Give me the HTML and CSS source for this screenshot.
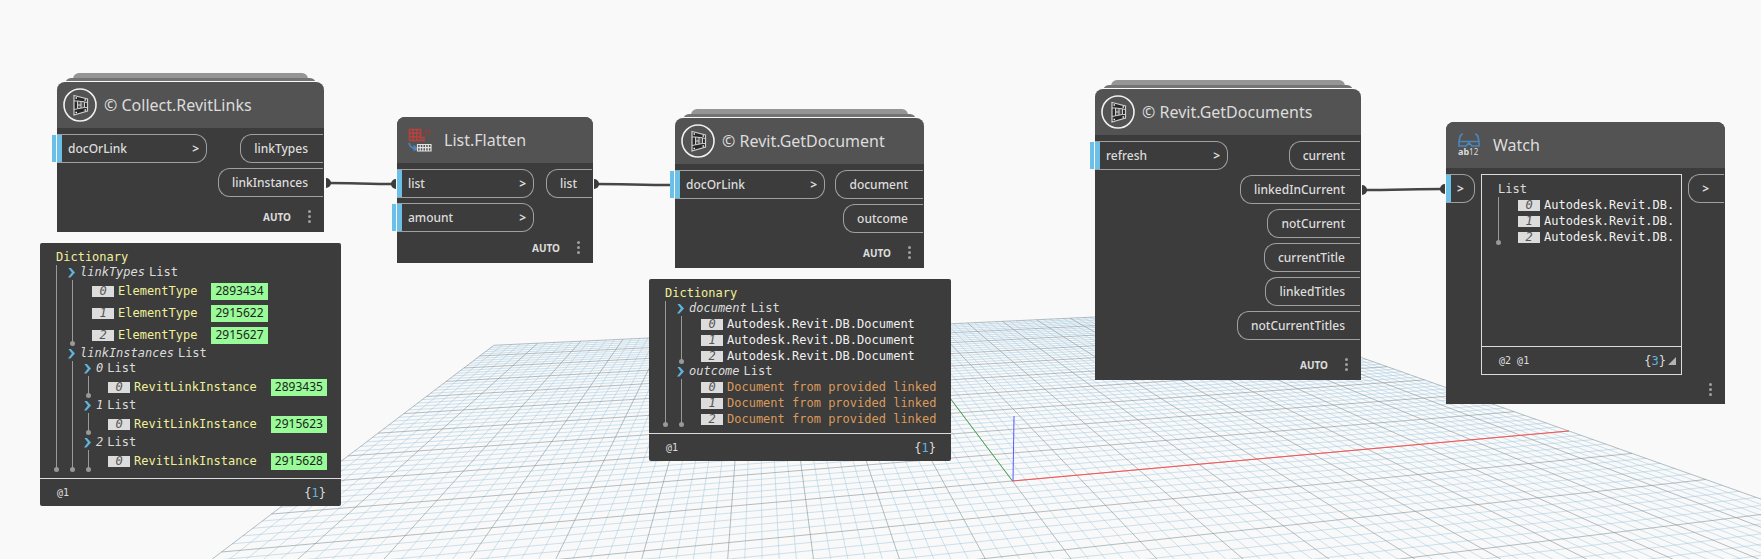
FILE: index.html
```html
<!DOCTYPE html>
<html lang="en">
    <head>
        <meta charset="UTF-8" />
        <meta name="viewport" content="width=device-width, initial-scale=1.0" />
        <title>Workspace</title>
        <link rel="stylesheet" href="styles.css">
    </head>
    <body>
        <svg class="layer" aria-hidden="true">
            <path id="gridMinor" class="grid-minor"></path>
            <path id="gridMajor" class="grid-major"></path>
            <path id="axisY" class="axis-y"></path>
            <path id="axisX" class="axis-x"></path>
            <path class="axis-z" d="M1013 481L1014 416"></path>
        </svg>

        <!-- shared symbol for custom nodes -->
        <svg width="0" height="0" class="defs" aria-hidden="true">
            <symbol id="customIcon" viewBox="0 0 34 34">
                <circle cx="17" cy="17" r="16" fill="none" stroke="#f0f0f0" stroke-width="1.6"></circle>
                <path d="M11 7.500L24.500 11V23L11 27Z" fill="#262626" stroke="#cfcfcf" stroke-width="1.200"></path>
                <path d="M14.500 13L21.500 13.800V19.500L14.500 20.800Z" fill="#535353" stroke="#cfcfcf"></path>
                <path d="M18 13.500V20M11 13L14.500 13M11 21.500L14.500 20.800M21.500 14L24.500 14.500M21.500 19.500L24.500 19.500M14.500 17H18" fill="none" stroke="#cfcfcf"></path>
                <path d="M12.500 10H14M21.500 12H23M12.500 24.500H14M21.500 22H23" fill="none" stroke="#f0f0f0" stroke-width="1.500"></path>
            </symbol>
        </svg>

        <section id="collectLinks" class="node custom">
            <header class="node-header">
                <svg class="icon-custom"><use href="#customIcon"></use></svg>
                <span class="title">© Collect.RevitLinks</span>
            </header>
            <div class="ports">
                <div class="inputs">
                    <div class="port input open">docOrLink <button class="level" aria-label="docOrLink options">&gt;</button></div>
                </div>
                <div class="outputs">
                    <div class="port output">linkTypes</div>
                    <div class="port output">linkInstances</div>
                </div>
            </div>
            <footer class="node-footer"><span>AUTO</span><button class="dots" aria-label="Node menu"><i></i><i></i><i></i></button></footer>
        </section>

        <section id="flatten" class="node">
            <header class="node-header">
                <svg class="icon" viewBox="0 0 24 24">
                    <path d="M1.500 1.500H12.500V12.500H1.500ZM1.500 5.200H12.500M1.500 8.800H12.500M5.200 1.500V12.500M8.800 1.500V12.500M12.500 9.500H16V12.500H12.500" fill="none" stroke="#b9403c" stroke-width="1.600"></path>
                    <path d="M17.500 8V2.500H21.500V8" fill="none" stroke="#8c3f3f" stroke-width="1.400"></path>
                    <path d="M1 15C2 19 4 20.500 8 20.500M5.500 17.500L9 20.500L5.500 22.500" fill="none" stroke="#4a87bd" stroke-width="1.600"></path>
                    <path d="M9.500 16.500H23V23H9.500ZM9.500 19.700H23M12.200 16.500V23M14.900 16.500V23M17.600 16.500V23M20.300 16.500V23" fill="none" stroke="#e2e2e2" stroke-width="1.200"></path>
                </svg>
                <span class="title">List.Flatten</span>
            </header>
            <div class="ports">
                <div class="inputs">
                    <div class="port input">list <button class="level" aria-label="list options">&gt;</button></div>
                    <div class="port input open">amount <button class="level" aria-label="amount options">&gt;</button></div>
                </div>
                <div class="outputs">
                    <div class="port output">list</div>
                </div>
            </div>
            <footer class="node-footer"><span>AUTO</span><button class="dots" aria-label="Node menu"><i></i><i></i><i></i></button></footer>
        </section>

        <section id="getDocument" class="node custom">
            <header class="node-header">
                <svg class="icon-custom"><use href="#customIcon"></use></svg>
                <span class="title">© Revit.GetDocument</span>
            </header>
            <div class="ports">
                <div class="inputs">
                    <div class="port input open">docOrLink <button class="level" aria-label="docOrLink options">&gt;</button></div>
                </div>
                <div class="outputs">
                    <div class="port output">document</div>
                    <div class="port output">outcome</div>
                </div>
            </div>
            <footer class="node-footer"><span>AUTO</span><button class="dots" aria-label="Node menu"><i></i><i></i><i></i></button></footer>
        </section>

        <section id="getDocuments" class="node custom">
            <header class="node-header">
                <svg class="icon-custom"><use href="#customIcon"></use></svg>
                <span class="title">© Revit.GetDocuments</span>
            </header>
            <div class="ports">
                <div class="inputs">
                    <div class="port input open">refresh <button class="level" aria-label="refresh options">&gt;</button></div>
                </div>
                <div class="outputs">
                    <div class="port output">current</div>
                    <div class="port output">linkedInCurrent</div>
                    <div class="port output">notCurrent</div>
                    <div class="port output">currentTitle</div>
                    <div class="port output">linkedTitles</div>
                    <div class="port output">notCurrentTitles</div>
                </div>
            </div>
            <footer class="node-footer"><span>AUTO</span><button class="dots" aria-label="Node menu"><i></i><i></i><i></i></button></footer>
        </section>

        <section id="watch" class="node">
            <header class="node-header">
                <svg class="icon" viewBox="0 0 24 24">
                    <path d="M6 1C3 1 3 4 2 8.500V13H9L12 10L15 13H22V8.500C21 4 21 1 18 1M2 8.500H22" fill="none" stroke="#4a87bd" stroke-width="1.600"></path>
                    <text x="1" y="22" class="icon-text">ab<tspan class="icon-digits">12</tspan></text>
                </svg>
                <span class="title">Watch</span>
            </header>
            <div class="ports">
                <div class="inputs">
                    <div class="port input"><button class="level" aria-label="Input">&gt;</button></div>
                </div>
                <div class="watch-box">
                    <div class="tree">
                        <div class="row">List</div>
                        <ul class="branch">
                            <li class="item"><em class="index">0</em>Autodesk.Revit.DB.</li>
                            <li class="item"><em class="index">1</em>Autodesk.Revit.DB.</li>
                            <li class="item"><em class="index">2</em>Autodesk.Revit.DB.</li>
                        </ul>
                    </div>
                    <div class="levels"><span>@2 @1</span><span class="count">{<b>3</b>}</span><span class="grip"></span></div>
                </div>
                <div class="outputs">
                    <div class="port output"><button class="level" aria-label="Output">&gt;</button></div>
                </div>
            </div>
            <footer class="node-footer"><button class="dots" aria-label="Node menu"><i></i><i></i><i></i></button></footer>
        </section>

        <div id="linksPreview" class="preview">
            <div class="tree">
                <div class="row type">Dictionary</div>
                <ul class="branch">
                    <li>
                        <div class="row"><button class="toggle" aria-label="Toggle linkTypes"></button><em>linkTypes</em>List</div>
                        <ul class="branch">
                            <li class="item element"><em class="index">0</em>ElementType<a href="#2893434" class="id">2893434</a></li>
                            <li class="item element"><em class="index">1</em>ElementType<a href="#2915622" class="id">2915622</a></li>
                            <li class="item element"><em class="index">2</em>ElementType<a href="#2915627" class="id">2915627</a></li>
                        </ul>
                    </li>
                    <li>
                        <div class="row"><button class="toggle" aria-label="Toggle linkInstances"></button><em>linkInstances</em>List</div>
                        <ul class="branch">
                            <li>
                                <div class="row"><button class="toggle" aria-label="Toggle 0"></button><em>0</em>List</div>
                                <ul class="branch">
                                    <li class="item element"><em class="index">0</em>RevitLinkInstance<a href="#2893435" class="id">2893435</a></li>
                                </ul>
                            </li>
                            <li>
                                <div class="row"><button class="toggle" aria-label="Toggle 1"></button><em>1</em>List</div>
                                <ul class="branch">
                                    <li class="item element"><em class="index">0</em>RevitLinkInstance<a href="#2915623" class="id">2915623</a></li>
                                </ul>
                            </li>
                            <li>
                                <div class="row"><button class="toggle" aria-label="Toggle 2"></button><em>2</em>List</div>
                                <ul class="branch">
                                    <li class="item element"><em class="index">0</em>RevitLinkInstance<a href="#2915628" class="id">2915628</a></li>
                                </ul>
                            </li>
                        </ul>
                    </li>
                </ul>
            </div>
            <div class="levels"><span>@1</span><span class="count">{<b>1</b>}</span></div>
        </div>

        <div id="documentPreview" class="preview">
            <div class="tree">
                <div class="row type">Dictionary</div>
                <ul class="branch">
                    <li>
                        <div class="row"><button class="toggle" aria-label="Toggle document"></button><em>document</em>List</div>
                        <ul class="branch">
                            <li class="item"><em class="index">0</em>Autodesk.Revit.DB.Document</li>
                            <li class="item"><em class="index">1</em>Autodesk.Revit.DB.Document</li>
                            <li class="item"><em class="index">2</em>Autodesk.Revit.DB.Document</li>
                        </ul>
                    </li>
                    <li>
                        <div class="row"><button class="toggle" aria-label="Toggle outcome"></button><em>outcome</em>List</div>
                        <ul class="branch">
                            <li class="item string"><em class="index">0</em>Document from provided linked</li>
                            <li class="item string"><em class="index">1</em>Document from provided linked</li>
                            <li class="item string"><em class="index">2</em>Document from provided linked</li>
                        </ul>
                    </li>
                </ul>
            </div>
            <div class="levels"><span>@1</span><span class="count">{<b>1</b>}</span></div>
        </div>

        <svg class="layer wires" aria-hidden="true">
            <path class="wire" d="M328 183C350 183 370 184 394 184"></path>
            <path class="plug" d="M326 178A5 5 0 0 1 326 188ZM396 179A5 5 0 0 0 396 189Z"></path>
            <path class="wire" d="M596 184C620 184 645 185 670 185"></path>
            <path class="plug" d="M594 179A5 5 0 0 1 594 189Z"></path>
            <path class="wire" d="M1364 190C1390 190 1420 189 1443 189"></path>
            <path class="plug" d="M1362 185A5 5 0 0 1 1362 195ZM1445 184A5 5 0 0 0 1445 194Z"></path>
        </svg>

        <script>
            // Perspective of the ground plane: origin and the two vanishing points
            const origin = { x: 1012.5, y: 481 };
            const vanishX = { x: 4765, y: 144.1, k: 0.003482 };
            const vanishY = { x: 758.8, y: 144.1, k: 0.01697 };

            function project(u, v) {
                const a = vanishX.k * u;
                const b = vanishY.k * v;
                const w = 1 + a + b;
                const x = (origin.x + a * vanishX.x + b * vanishY.x) / w;
                const y = (origin.y + a * vanishX.y + b * vanishY.y) / w;
                return x.toFixed(1) + " " + y.toFixed(1);
            }

            function line(u1, v1, u2, v2) {
                return "M" + project(u1, v1) + "L" + project(u2, v2);
            }

            function drawGrid() {
                let minor = "";
                let major = "";
                for (let i = -50; i <= 50; i++) {
                    // the near part of the plane is below the window
                    let d = line(i, -40, i, 50);
                    if (i >= -40) d += line(-50, i, 50, i);
                    if (i % 5 === 0) major += d;
                    else minor += d;
                }
                document.getElementById("gridMinor").setAttribute("d", minor);
                document.getElementById("gridMajor").setAttribute("d", major);
                document.getElementById("axisX").setAttribute("d", line(0, 0, 50, 0));
                document.getElementById("axisY").setAttribute("d", line(0, 0, 0, 50));
            }

            drawGrid();
        </script>
    </body>
</html>
```
FILE: styles.css
```css
* {
    box-sizing: border-box;
}
body {
    margin: 0;
    min-height: 100vh;
    position: relative;
    overflow: hidden;
    background-color: #f9f9f9;
    font-family: "Noto Sans", "Open Sans", sans-serif;
    font-size: 12px;
    color: #dcdcdc;
}
button {
    margin: 0;
    padding: 0;
    border: 0;
    background: none;
    color: inherit;
    font: inherit;
    cursor: pointer;
}
ul {
    list-style: none;
    margin: 0;
    padding: 0;
}

/* background grid and wires */
.layer {
    position: absolute;
    top: 0;
    left: 0;
    width: 100%;
    height: 100%;
    pointer-events: none;
}
.layer path {
    fill: none;
}
.defs {
    position: absolute;
}
.grid-minor {
    stroke: #a0c8e0;
    stroke-opacity: 0.5;
}
.grid-major {
    stroke: #82949f;
    stroke-opacity: 0.6;
}
.axis-x {
    stroke: #ff5050;
}
.axis-y {
    stroke: #4ca64c;
}
.axis-z {
    stroke: #5a5aff;
}
.wire {
    stroke: #464646;
    stroke-width: 2.5;
}
.layer .plug {
    fill: #3c3c3c;
}

/* nodes */
.node {
    position: absolute;
    background-color: #3c3c3c;
    border-radius: 8px 8px 0 0;
}
#collectLinks {
    left: 57px;
    top: 82px;
    width: 267px;
    --input-width: 150px;
}
#flatten {
    left: 397px;
    top: 117px;
    width: 196px;
    --input-width: 137px;
}
#getDocument {
    left: 675px;
    top: 118px;
    width: 249px;
    --input-width: 150px;
}
#getDocuments {
    left: 1095px;
    top: 89px;
    width: 266px;
    --input-width: 133px;
}
#watch {
    left: 1446px;
    top: 122px;
    width: 279px;
    --input-width: 29px;
}
.custom::before,
.custom::after {
    content: "";
    position: absolute;
    z-index: -1;
    border-radius: 6px 6px 0 0;
}
.custom::before {
    left: 16px;
    right: 16px;
    top: -9px;
    height: 8px;
    background-color: #959595;
}
.custom::after {
    left: 8px;
    right: 8px;
    top: -4px;
    height: 8px;
    background-color: #747474;
}
.node-header {
    display: flex;
    align-items: center;
    height: 46px;
    background-color: #535353;
    border-radius: 8px 8px 0 0;
}
.custom .node-header {
    box-shadow: 0 -1px 0 #f9f9f9;
}
.icon-custom {
    width: 34px;
    height: 34px;
    margin-left: 6px;
}
.icon {
    width: 24px;
    height: 24px;
    margin: 0 12px 0 11px;
}
.icon-text {
    font-size: 9px;
    font-weight: bold;
    fill: #dcdcdc;
}
.icon-digits {
    font-size: 8px;
    font-weight: normal;
}
.title {
    font-size: 16px;
    white-space: nowrap;
}
.icon-custom + .title {
    margin-left: 7px;
}
.ports {
    display: flex;
    justify-content: space-between;
    padding-top: 6px;
}
.inputs,
.outputs {
    display: flex;
    flex-direction: column;
    gap: 5px;
}
.outputs {
    align-items: flex-end;
    padding-right: 1px;
}
.port {
    display: flex;
    align-items: center;
    justify-content: space-between;
    height: 29px;
    border: 1px solid #a0a0a0;
    font-weight: 500;
}
.input {
    position: relative;
    width: var(--input-width);
    padding: 0 7px 0 11px;
    border-left: 0;
    border-radius: 0 12px 12px 0;
}
.input::before {
    content: "";
    position: absolute;
    left: 0;
    top: 0;
    width: 5px;
    height: 27px;
    background-color: #6ac0e7;
}
.input.open::after {
    content: "";
    position: absolute;
    left: -5px;
    top: 0;
    width: 4px;
    height: 27px;
    background-color: #6ac0e7;
}
.output {
    padding: 0 15px 0 13px;
    border-right: 0;
    border-radius: 12px 0 0 12px;
}
.level {
    font-weight: bold;
}
.node-footer {
    display: flex;
    align-items: center;
    justify-content: flex-end;
    gap: 17px;
    height: 31px;
    padding-right: 13px;
    font-size: 10px;
    font-weight: bold;
}
.custom .node-footer {
    margin-top: 4px;
}
#getDocuments .node-footer {
    margin-top: 9px;
}
#watch .node-footer {
    height: 29px;
}
.dots {
    display: flex;
    flex-direction: column;
    gap: 2px;
}
.dots i {
    width: 3px;
    height: 3px;
    border-radius: 50%;
    background-color: #a0a0a0;
}

/* value trees */
.preview {
    position: absolute;
    background-color: #3c3c3c;
    border-radius: 2px;
}
#linksPreview {
    left: 40px;
    top: 243px;
    width: 301px;
}
#documentPreview {
    left: 649px;
    top: 279px;
    width: 302px;
}
.watch-box {
    display: flex;
    flex-direction: column;
    width: 201px;
    height: 201px;
    border: 1px solid #dcdcdc;
}
.watch-box .tree {
    flex: 1;
}
.tree {
    padding: 7px 0 6px 16px;
    font-family: "DejaVu Sans Mono", "Liberation Mono", monospace;
    font-size: 12px;
    line-height: 15px;
    white-space: nowrap;
}
.row {
    display: flex;
    align-items: center;
    height: 15px;
}
.row em {
    margin: 0 4px 0 5px;
}
.type {
    color: #f0f09b;
}
.branch {
    position: relative;
}
.branch::before {
    content: "";
    position: absolute;
    left: 0;
    top: 0;
    bottom: 3px;
    width: 1px;
    background-color: #999999;
}
.branch::after {
    content: "";
    position: absolute;
    left: -2px;
    bottom: 0;
    width: 5px;
    height: 5px;
    border-radius: 50%;
    background-color: #999999;
}
.branch .row {
    padding-left: 12px;
}
.branch .branch {
    margin-left: 16px;
}
.toggle {
    width: 7px;
    height: 10px;
    background-color: #5fb4e0;
    clip-path: polygon(0 0, 35% 0, 100% 50%, 35% 100%, 0 100%, 55% 50%);
}
.item {
    display: flex;
    align-items: center;
    height: 16px;
    padding-left: 20px;
    color: #f0f0f0;
}
.index {
    flex: none;
    width: 22px;
    height: 11px;
    margin-right: 4px;
    background-color: #dcdcdc;
    color: #555555;
    line-height: 11px;
    text-align: center;
}
.element {
    height: 22px;
    color: #f0f09b;
}
.string {
    color: #d99a5b;
}
.id {
    height: 17px;
    margin-left: 14px;
    padding: 0 4px;
    background-color: #98fb98;
    color: #1e1e1e;
    font-family: "Noto Sans", "Open Sans", sans-serif;
    line-height: 16px;
    text-decoration: none;
}
.levels {
    position: relative;
    display: flex;
    align-items: center;
    justify-content: space-between;
    height: 28px;
    padding: 0 15px 0 17px;
    border-top: 1px solid #dcdcdc;
    font-family: "DejaVu Sans Mono", "Liberation Mono", monospace;
    font-size: 10px;
}
.count {
    font-size: 12px;
}
.count b {
    color: #5fb4e0;
    font-weight: normal;
}
.grip {
    position: absolute;
    right: 5px;
    bottom: 9px;
    width: 8px;
    height: 8px;
    background-color: #b4b4b4;
    clip-path: polygon(100% 0, 100% 100%, 0 100%);
}
```
